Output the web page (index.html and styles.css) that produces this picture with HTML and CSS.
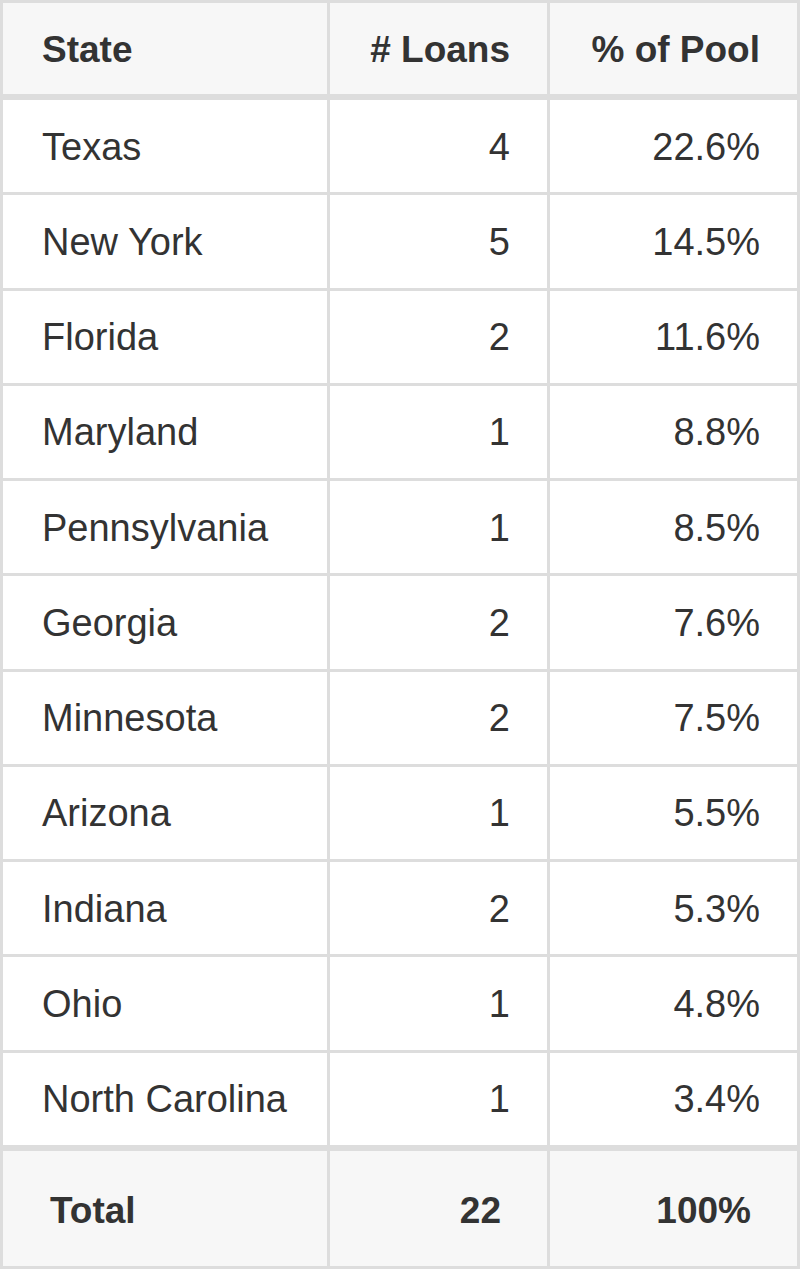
FILE: index.html
```html
<!DOCTYPE html>
<html lang="en">
<head>
<meta charset="utf-8">
<title>Loans by State</title>
<link rel="stylesheet" href="styles.css">
</head>
<body>
<table class="pool-table">
  <thead>
    <tr>
      <th class="col-state">State</th>
      <th class="col-loans num">#&nbsp;Loans</th>
      <th class="col-pct num">% of Pool</th>
    </tr>
  </thead>
  <tbody>
    <tr><td>Texas</td><td class="num">4</td><td class="num">22.6%</td></tr>
    <tr><td>New York</td><td class="num">5</td><td class="num">14.5%</td></tr>
    <tr><td>Florida</td><td class="num">2</td><td class="num">11.6%</td></tr>
    <tr><td>Maryland</td><td class="num">1</td><td class="num">8.8%</td></tr>
    <tr><td>Pennsylvania</td><td class="num">1</td><td class="num">8.5%</td></tr>
    <tr><td>Georgia</td><td class="num">2</td><td class="num">7.6%</td></tr>
    <tr><td>Minnesota</td><td class="num">2</td><td class="num">7.5%</td></tr>
    <tr><td>Arizona</td><td class="num">1</td><td class="num">5.5%</td></tr>
    <tr><td>Indiana</td><td class="num">2</td><td class="num">5.3%</td></tr>
    <tr><td>Ohio</td><td class="num">1</td><td class="num">4.8%</td></tr>
    <tr><td>North Carolina</td><td class="num">1</td><td class="num">3.4%</td></tr>
  </tbody>
  <tfoot>
    <tr><td>Total</td><td class="num">22</td><td class="num">100%</td></tr>
  </tfoot>
</table>
</body>
</html>
```

FILE: styles.css
```css
html, body {
  margin: 0;
  padding: 0;
  background: #ffffff;
}

.pool-table {
  width: 800px;
  table-layout: fixed;
  border-collapse: separate;
  border-spacing: 0;
  border-top: 3px solid #dddddd;
  border-left: 3px solid #dddddd;
  font-family: "Liberation Sans", Arial, Helvetica, sans-serif;
  font-size: 38px;
  color: #333333;
}

.pool-table th,
.pool-table td {
  box-sizing: border-box;
  padding: 0 37px 0 39px;
  border-right: 3px solid #dddddd;
  text-align: left;
  vertical-align: middle;
  white-space: nowrap;
}

.pool-table .num {
  text-align: right;
}

.col-state { width: 327px; }
.col-loans { width: 220px; }
.col-pct { width: 250px; }

.pool-table thead th {
  height: 97px;
  padding-top: 3px;
  font-size: 37px;
  font-weight: bold;
  background: #f7f7f7;
  border-bottom: 6px solid #dddddd;
}

.pool-table tbody td {
  height: 95.27px;
  padding-top: 2px;
  border-bottom: 3px solid #dddddd;
  background: #ffffff;
}

.pool-table tfoot td {
  height: 121px;
  padding: 5px 46px 0 47px;
  font-size: 37px;
  font-weight: bold;
  background: #f7f7f7;
  border-top: 3px solid #dddddd;
  border-bottom: 3px solid #dddddd;
}
```
